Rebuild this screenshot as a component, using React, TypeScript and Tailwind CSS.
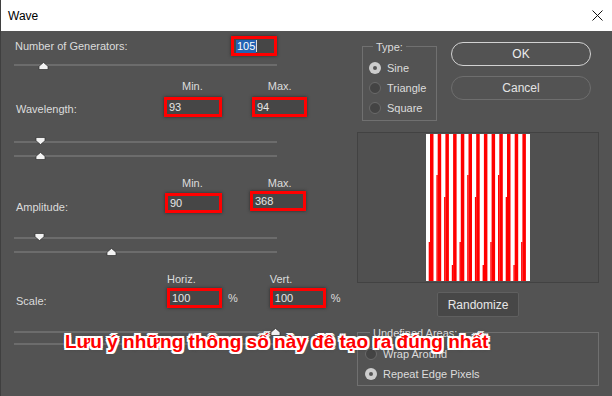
import React from "react";

const ThumbUp = ({ left, top }: { left: number; top: number }) => (
  <svg
    className="absolute"
    style={{ left, top }}
    width="11"
    height="8"
    viewBox="0 0 11 8"
  >
    <path d="M5.5 0.5 L10 4.2 L10 7.5 L1 7.5 L1 4.2 Z" fill="#f2f2f2" stroke="#2e2e2e" strokeWidth="0.7" />
  </svg>
);

const ThumbDown = ({ left, top }: { left: number; top: number }) => (
  <svg
    className="absolute"
    style={{ left, top }}
    width="11"
    height="8"
    viewBox="0 0 11 8"
  >
    <path d="M1 0.5 L10 0.5 L10 3.8 L5.5 7.5 L1 3.8 Z" fill="#f2f2f2" stroke="#2e2e2e" strokeWidth="0.7" />
  </svg>
);

const Track = ({ className, children }: { className: string; children?: React.ReactNode }) => (
  <div className={`relative h-[2px] w-[263px] bg-[#6c6c6c] ${className}`}>{children}</div>
);

const Box = ({ w, value, className = "" }: { w: number; value: string; className?: string }) => (
  <div
    className={`h-[20px] border-[3px] border-[#ff0000] bg-[#464646] shadow-[0_0_3px_#2a2a2a] flex items-center pl-[2px] text-[11px] leading-none text-[#e6e6e6] ${className}`}
    style={{ width: w }}
  >
    {value}
  </div>
);

const Radio = ({ checked }: { checked?: boolean }) =>
  checked ? (
    <div className="w-[12px] h-[12px] rounded-full bg-[#cdcdcd] flex items-center justify-center">
      <div className="w-[4px] h-[4px] rounded-full bg-[#555555]" />
    </div>
  ) : (
    <div className="w-[12px] h-[12px] rounded-full bg-[#444444] border border-[#6a6a6a]" />
  );

const Stripes = () => {
  const starts = [108, 41, 63, 131];
  const stripes = [];
  for (let i = 0; i < 13; i++) {
    const x = 4 + i * 7.7;
    stripes.push(<rect key={"s" + i} x={x} y={0} width={3.5} height={147} fill="#ff0000" />);
    const s = starts[i % 4];
    stripes.push(<rect key={"e" + i} x={x - 1.3} y={s} width={1.4} height={147 - s} fill="#ff0000" />);
  }
  return (
    <svg width="104" height="147" viewBox="0 0 104 147" className="block">
      <rect width="104" height="147" fill="#ffffff" />
      {stripes}
    </svg>
  );
};

export default function App() {
  return (
    <div className="relative w-[612px] h-[396px] overflow-hidden bg-[#535353] font-['Liberation_Sans',Arial,sans-serif] border-l border-[#3f3f3f]">
      {/* Title bar */}
      <div className="h-[31px] bg-white flex items-center justify-between pl-[7px] pr-[9px]">
        <span className="text-[12px] text-black">Wave</span>
        <svg width="11" height="11" viewBox="0 0 11 11">
          <path d="M0.5 0.5 L10.5 10.5 M10.5 0.5 L0.5 10.5" stroke="#111" strokeWidth="1" />
        </svg>
      </div>

      <div className="flex text-[11px] text-[#dcdcdc]">
        {/* Left column */}
        <div className="w-[356px] pl-[13px] flex flex-col">
          {/* Number of Generators */}
          <div className="mt-[5px] h-[20px] flex items-center">
            <div className="w-[217px] pl-[1px]">Number of Generators:</div>
            <div className="w-[46px] h-[20px] border-[3px] border-[#ff0000] bg-[#464646] shadow-[0_0_3px_#2a2a2a] flex items-center pl-[2px] text-[11px] leading-none">
              <span className="bg-[#2463b3] text-white px-[1px] py-[1px]">105</span>
              <span className="w-[1px] h-[12px] bg-[#dddddd]" />
            </div>
          </div>
          <Track className="mt-[8px]">
            <ThumbUp left={23.5} top={-2} />
          </Track>

          {/* Wavelength */}
          <div className="mt-[14px] h-[13px] flex leading-[13px]">
            <span className="ml-[168px]">Min.</span>
            <span className="ml-[65px]">Max.</span>
          </div>
          <div className="mt-[4px] h-[20px] flex items-center">
            <div className="w-[150px] pl-[2px] pt-[4px]">Wavelength:</div>
            <Box w={58} value="93" />
            <Box w={55} value="94" className="ml-[30px]" />
          </div>
          <Track className="mt-[24px]">
            <ThumbDown left={20.5} top={-4} />
          </Track>
          <Track className="mt-[12px]">
            <ThumbUp left={20.5} top={-3} />
          </Track>

          {/* Amplitude */}
          <div className="mt-[20px] h-[13px] flex leading-[13px]">
            <span className="ml-[168px]">Min.</span>
            <span className="ml-[65px]">Max.</span>
          </div>
          <div className="mt-[1px] h-[22px] flex items-start">
            <div className="w-[151px] pl-[2px] pt-[8px]">Amplitude:</div>
            <Box w={57} value="90" className="mt-[2px]" />
            <Box w={56} value="368" className="ml-[28px]" />
          </div>
          <Track className="mt-[24px]">
            <ThumbDown left={19.5} top={-4} />
          </Track>
          <Track className="mt-[12px]">
            <ThumbUp left={91.5} top={-3} />
          </Track>

          {/* Scale */}
          <div className="mt-[20px] h-[13px] flex leading-[13px]">
            <span className="ml-[153px]">Horiz.</span>
            <span className="ml-[74px]">Vert.</span>
          </div>
          <div className="mt-[3px] h-[18px] flex items-center">
            <div className="w-[153px] pl-[2px] pt-[6px]">Scale:</div>
            <Box w={55} value="100" className="h-[18px]" />
            <span className="ml-[6px]">%</span>
            <Box w={56} value="100" className="ml-[32px] h-[18px]" />
            <span className="ml-[5px]">%</span>
          </div>
          <Track className="mt-[24px]">
            <ThumbUp left={255.5} top={-3} />
          </Track>
          <Track className="mt-[10px]" />
        </div>

        {/* Right column */}
        <div className="w-[242px] flex flex-col">
          <div className="flex pt-[11px]">
            <div className="relative ml-[5px] mt-[4px] w-[75px] h-[75px] border border-[#707070]">
              <span className="absolute left-[10px] top-[-6px] px-[3px] bg-[#535353] leading-[13px]">Type:</span>
              <div className="flex flex-col pl-[6px] pt-[15px] gap-[8px]">
                <div className="flex items-center gap-[6px] h-[12px]">
                  <Radio checked />
                  <span>Sine</span>
                </div>
                <div className="flex items-center gap-[6px] h-[12px]">
                  <Radio />
                  <span>Triangle</span>
                </div>
                <div className="flex items-center gap-[6px] h-[12px]">
                  <Radio />
                  <span>Square</span>
                </div>
              </div>
            </div>
            <div className="ml-[14px] w-[140px] flex flex-col gap-[10px]">
              <div className="h-[24px] rounded-full border-[1.5px] border-[#d2d2d2] flex items-center justify-center text-[12px] text-[#eeeeee]">
                OK
              </div>
              <div className="h-[24px] rounded-full border border-[#6e6e6e] flex items-center justify-center text-[12px] text-[#e4e4e4]">
                Cancel
              </div>
            </div>
          </div>

          <div className="mt-[11px] h-[151px] border border-[#424242] bg-[#505050] flex justify-center pt-[1px]">
            <Stripes />
          </div>

          <div className="mt-[9px] self-center w-[82px] h-[25px] rounded-[2px] border border-[#5f5f5f] bg-[#474747] flex items-center justify-center text-[12px] text-[#e8e8e8]">
            Randomize
          </div>

          <div className="relative mt-[15px] h-[54px] border border-[#707070]">
            <span className="absolute left-[12px] top-[-6px] px-[3px] bg-[#535353] leading-[13px]">Undefined Areas:</span>
            <div className="flex flex-col pl-[7px] pt-[15px] gap-[8px]">
              <div className="flex items-center gap-[6px] h-[12px]">
                <Radio />
                <span>Wrap Around</span>
              </div>
              <div className="flex items-center gap-[6px] h-[12px]">
                <Radio checked />
                <span>Repeat Edge Pixels</span>
              </div>
            </div>
          </div>
        </div>
      </div>

      {/* Annotation overlay */}
      <div className="absolute left-[64px] top-[332px] text-[19px] leading-none font-bold text-[#ff0000] whitespace-nowrap font-['Liberation_Sans',Arial,sans-serif] [text-shadow:-2px_-2px_0_#fff,2px_-2px_0_#fff,-2px_2px_0_#fff,2px_2px_0_#fff,0_2px_0_#fff,0_-2px_0_#fff,2px_0_0_#fff,-2px_0_0_#fff,0_0_4px_#333]">
        Lưu ý những thông số này đê tạo ra đúng nhất
      </div>
    </div>
  );
}
